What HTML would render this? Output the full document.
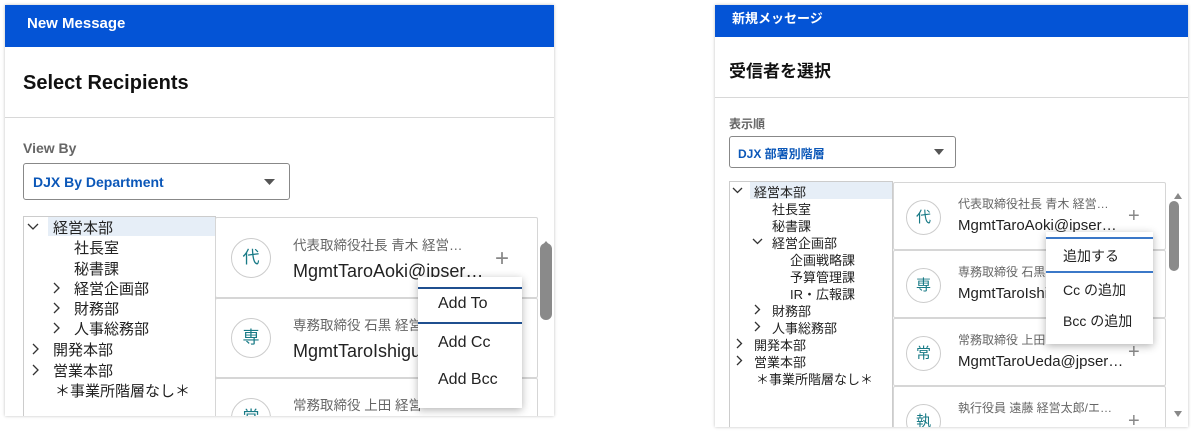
<!DOCTYPE html>
<html><head><meta charset="utf-8"><style>
*{margin:0;padding:0;box-sizing:border-box}
html,body{width:1191px;height:431px;overflow:hidden}
body{background:#fff;position:relative;font-family:"Liberation Sans","Noto Sans CJK JP",sans-serif;color:#222}
.a{position:absolute;white-space:nowrap}
.panel{position:absolute;background:#fff;box-shadow:0 0 3px rgba(0,0,0,.25);overflow:hidden}
.hdr{position:absolute;left:0;top:0;right:0;background:#0454d6;color:#fff;font-weight:bold}
.card{position:absolute;border:1px solid #d6d6d6;background:#fff;border-radius:2px}
.av{position:absolute;border:1px solid #ccc;border-radius:50%;color:#187a86;text-align:center}
.gray{color:#666}
.menu{position:absolute;background:#fff;box-shadow:0 2px 8px rgba(0,0,0,.3)}
.ln{position:absolute;height:1.5px;background:#1f4f8f}
.sb{position:absolute;background:#8a8a8a;border-radius:6px}
svg.c{position:absolute;fill:none;stroke:#333;stroke-width:1.3}
</style></head><body>

<!-- LEFT -->
<div class="panel" style="left:5px;top:5px;width:549px;height:411px">
  <div class="hdr" style="height:42px;font-size:15px;line-height:38px;padding-left:22px">New Message</div>
  <div class="a" style="left:18px;top:67px;font-size:20px;font-weight:bold;color:#111">Select Recipients</div>
  <div class="a" style="left:0;top:112px;width:549px;height:1px;background:#d8d8d8"></div>
  <div class="a gray" style="left:18px;top:135px;font-size:14px;font-weight:bold;color:#666">View By</div>
  <div class="a" style="left:18px;top:158px;width:267px;height:37px;border:1px solid #888;border-radius:3px"></div>
  <div class="a" style="left:28px;top:169px;font-size:14px;font-weight:bold;color:#0b57b8">DJX By Department</div>
  <svg class="a" style="left:259px;top:174px" width="11" height="7"><path d="M0 0h11L5.5 6z" fill="#555"/></svg>
  <div class="a" style="left:18px;top:211px;width:193px;height:210px;border:1px solid #ccc"></div>
  <div class="a" style="left:43px;top:212px;width:167px;height:19px;background:#e6eef7"></div>
  <svg class="c" style="left:22px;top:218px" width="12" height="8"><path d="M1 1l5 5 5-5"/></svg>
  <svg class="c" style="left:47px;top:277px" width="8" height="12"><path d="M2 1l5 5-5 5"/></svg>
  <svg class="c" style="left:47px;top:297px" width="8" height="12"><path d="M2 1l5 5-5 5"/></svg>
  <svg class="c" style="left:47px;top:317px" width="8" height="12"><path d="M2 1l5 5-5 5"/></svg>
  <svg class="c" style="left:26px;top:338px" width="8" height="12"><path d="M2 1l5 5-5 5"/></svg>
  <svg class="c" style="left:26px;top:359px" width="8" height="12"><path d="M2 1l5 5-5 5"/></svg>
  <div style="font-size:15px;color:#222">
    <div class="a" style="left:48px;top:212px">経営本部</div>
    <div class="a" style="left:69px;top:232px">社長室</div>
    <div class="a" style="left:69px;top:253px">秘書課</div>
    <div class="a" style="left:69px;top:273px">経営企画部</div>
    <div class="a" style="left:69px;top:293px">財務部</div>
    <div class="a" style="left:69px;top:313px">人事総務部</div>
    <div class="a" style="left:48px;top:334px">開発本部</div>
    <div class="a" style="left:48px;top:355px">営業本部</div>
    <div class="a" style="left:50px;top:375px">＊事業所階層なし＊</div>
  </div>
  <div class="card" style="left:210px;top:212px;width:323px;height:81px"></div>
  <div class="card" style="left:210px;top:293px;width:323px;height:80px"></div>
  <div class="card" style="left:210px;top:373px;width:323px;height:80px"></div>
  <div class="av" style="left:226px;top:233px;width:40px;height:40px;font-size:17px;line-height:38px">代</div>
  <div class="av" style="left:226px;top:313px;width:40px;height:40px;font-size:17px;line-height:38px">専</div>
  <div class="av" style="left:226px;top:393px;width:40px;height:40px;font-size:17px;line-height:38px">常</div>
  <div class="a gray" style="left:288px;top:229px;font-size:13.5px">代表取締役社長 青木 経営…</div>
  <div class="a" style="left:288px;top:256px;font-size:18px;color:#222">MgmtTaroAoki@ipser…</div>
  <div class="a" style="left:490px;top:240px;font-size:24px;color:#888;font-weight:300">+</div>
  <div class="a gray" style="left:288px;top:309px;font-size:13.5px">専務取締役 石黒 経営</div>
  <div class="a" style="left:288px;top:336px;font-size:18px">MgmtTaroIshiguro</div>
  <div class="a gray" style="left:288px;top:389px;font-size:13.5px">常務取締役 上田 経営</div>
  <svg class="a" style="left:536px;top:235px" width="10" height="8"><path d="M0 7L5 1L10 7z" fill="#888"/></svg>
  <div class="sb" style="left:535px;top:238px;width:12px;height:77px"></div>
  <div class="menu" style="left:413px;top:272px;width:104px;height:131px">
    <div class="ln" style="left:0;top:10px;width:104px"></div>
    <div class="ln" style="left:0;top:45px;width:104px"></div>
    <div class="a" style="left:20px;top:18px;font-size:16px">Add To</div>
    <div class="a" style="left:20px;top:57px;font-size:16px">Add Cc</div>
    <div class="a" style="left:20px;top:94px;font-size:16px">Add Bcc</div>
  </div>
</div>

<!-- RIGHT -->
<div class="panel" style="left:715px;top:5px;width:473px;height:422px">
  <div class="hdr" style="height:32px;font-size:13px;line-height:28px;padding-left:17px">新規メッセージ</div>
  <div class="a" style="left:14px;top:52px;font-size:17px;font-weight:bold;color:#111">受信者を選択</div>
  <div class="a" style="left:0;top:92px;width:473px;height:1px;background:#d8d8d8"></div>
  <div class="a" style="left:14px;top:110px;font-size:12px;color:#666;font-weight:bold">表示順</div>
  <div class="a" style="left:14px;top:131px;width:227px;height:32px;border:1px solid #888;border-radius:3px"></div>
  <div class="a" style="left:23px;top:140px;font-size:12px;font-weight:bold;color:#0b57b8">DJX 部署別階層</div>
  <svg class="a" style="left:219px;top:144px" width="10" height="6"><path d="M0 0h10L5 6z" fill="#555"/></svg>
  <div class="a" style="left:14px;top:176px;width:164px;height:248px;border:1px solid #ccc"></div>
  <div class="a" style="left:35px;top:177px;width:142px;height:17px;background:#e6eef7"></div>
  <svg class="c" style="left:17px;top:182px" width="11" height="7"><path d="M1 1l4.5 4.5L10 1"/></svg>
  <svg class="c" style="left:37px;top:233px" width="11" height="7"><path d="M1 1l4.5 4.5L10 1"/></svg>
  <svg class="c" style="left:39px;top:299px" width="7" height="11"><path d="M1 1l4.5 4.5L1 10"/></svg>
  <svg class="c" style="left:39px;top:316px" width="7" height="11"><path d="M1 1l4.5 4.5L1 10"/></svg>
  <svg class="c" style="left:21px;top:333px" width="7" height="11"><path d="M1 1l4.5 4.5L1 10"/></svg>
  <svg class="c" style="left:21px;top:350px" width="7" height="11"><path d="M1 1l4.5 4.5L1 10"/></svg>
  <div style="font-size:13px;color:#222">
    <div class="a" style="left:39px;top:177px">経営本部</div>
    <div class="a" style="left:57px;top:194px">社長室</div>
    <div class="a" style="left:57px;top:211px">秘書課</div>
    <div class="a" style="left:57px;top:228px">経営企画部</div>
    <div class="a" style="left:75px;top:245px">企画戦略課</div>
    <div class="a" style="left:75px;top:262px">予算管理課</div>
    <div class="a" style="left:75px;top:279px">IR・広報課</div>
    <div class="a" style="left:57px;top:296px">財務部</div>
    <div class="a" style="left:57px;top:313px">人事総務部</div>
    <div class="a" style="left:39px;top:330px">開発本部</div>
    <div class="a" style="left:39px;top:347px">営業本部</div>
    <div class="a" style="left:41px;top:364px">＊事業所階層なし＊</div>
  </div>
  <div class="card" style="left:178px;top:177px;width:273px;height:68px"></div>
  <div class="card" style="left:178px;top:245px;width:273px;height:68px"></div>
  <div class="card" style="left:178px;top:313px;width:273px;height:68px"></div>
  <div class="card" style="left:178px;top:381px;width:273px;height:68px"></div>
  <div class="av" style="left:191px;top:195px;width:35px;height:35px;font-size:15px;line-height:33px">代</div>
  <div class="av" style="left:191px;top:263px;width:35px;height:35px;font-size:15px;line-height:33px">専</div>
  <div class="av" style="left:191px;top:331px;width:35px;height:35px;font-size:15px;line-height:33px">常</div>
  <div class="av" style="left:191px;top:399px;width:35px;height:35px;font-size:15px;line-height:33px">執</div>
  <div class="a gray" style="left:243px;top:190px;font-size:12px">代表取締役社長 青木 経営…</div>
  <div class="a" style="left:243px;top:212px;font-size:15px">MgmtTaroAoki@ipser…</div>
  <div class="a" style="left:413px;top:200px;font-size:20px;color:#888">+</div>
  <div class="a gray" style="left:243px;top:258px;font-size:12px">専務取締役 石黒</div>
  <div class="a" style="left:243px;top:280px;font-size:15px">MgmtTaroIshi</div>
  <div class="a gray" style="left:243px;top:326px;font-size:12px">常務取締役 上田</div>
  <div class="a" style="left:243px;top:348px;font-size:15px">MgmtTaroUeda@jpser…</div>
  <div class="a" style="left:413px;top:336px;font-size:20px;color:#888">+</div>
  <div class="a gray" style="left:243px;top:394px;font-size:12px">執行役員 遠藤 経営太郎/エ…</div>
  <div class="a" style="left:413px;top:405px;font-size:20px;color:#888">+</div>
  <svg class="a" style="left:459px;top:188px" width="8" height="6"><path d="M0 6L4 0L8 6z" fill="#888"/></svg>
  <svg class="a" style="left:459px;top:406px" width="8" height="6"><path d="M0 0L4 6L8 0z" fill="#888"/></svg>
  <div class="sb" style="left:454px;top:196px;width:10px;height:70px"></div>
  <div class="menu" style="left:331px;top:227px;width:107px;height:112px">
    <div class="ln" style="left:0;top:5px;width:107px;background:#3b78c8"></div>
    <div class="ln" style="left:0;top:39px;width:107px;background:#3b78c8"></div>
    <div class="a" style="left:17px;top:14px;font-size:14px">追加する</div>
    <div class="a" style="left:17px;top:48px;font-size:14px">Cc の追加</div>
    <div class="a" style="left:17px;top:79px;font-size:14px">Bcc の追加</div>
  </div>
</div>
</body></html>
